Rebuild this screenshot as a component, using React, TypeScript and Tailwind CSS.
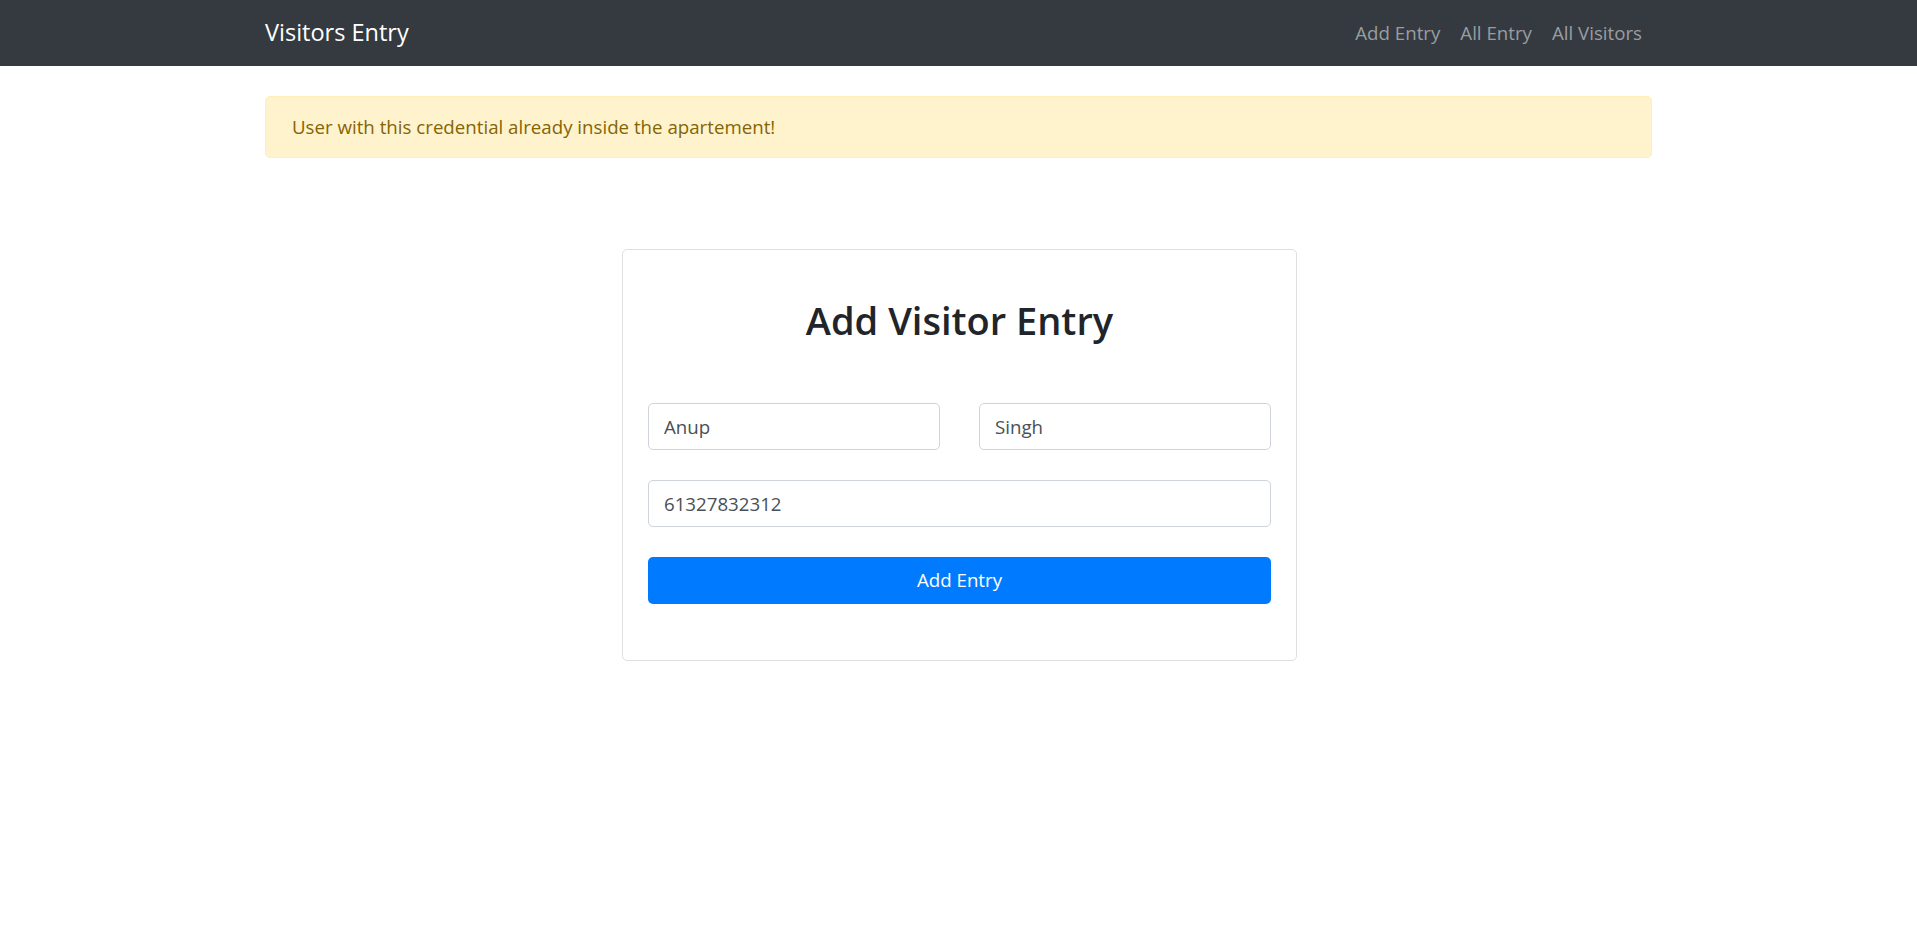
import React, { useState } from "react";

const font = { fontFamily: '"Segoe UI", "Open Sans", "Noto Sans", sans-serif' };

const Navbar = () => {
  return (
    <nav className="w-full h-[66px] bg-[#343a40]">
      <div className="w-[1387px] mx-auto h-full flex items-center justify-between">
        <a href="#" className="text-white text-[23.5px] leading-none">
          Visitors Entry
        </a>
        <ul className="flex items-center">
          {["Add Entry", "All Entry", "All Visitors"].map((label) => (
            <li key={label}>
              <a href="#" className="block px-[10px] text-[18.7px] text-[#9a9da0]">
                {label}
              </a>
            </li>
          ))}
        </ul>
      </div>
    </nav>
  );
};

export default function App() {
  const [firstName, setFirstName] = useState("Anup");
  const [lastName, setLastName] = useState("Singh");
  const [phone, setPhone] = useState("61327832312");

  const inputCls =
    "h-[47px] px-[15px] border border-[#ced4da] rounded-[5px] text-[18.7px] text-[#495057] outline-none bg-white";

  return (
    <div className="min-h-[927px] bg-white" style={font}>
      <Navbar />
      <main className="w-[1387px] mx-auto">
        <div className="mt-[30px] h-[62px] flex items-center px-[26px] bg-[#fff3cd] border border-[#ffeeba] rounded-[5px] text-[18.7px] text-[#856404]">
          User with this credential already inside the apartement!
        </div>

        <div className="mt-[91px] ml-[357px] w-[675px] border border-[#dfdfdf] rounded-[5px] px-[25px] pt-[48px] pb-[56px]">
          <h2 className="text-center text-[38px] leading-[1.2] font-semibold text-[#212529]">
            Add Visitor Entry
          </h2>
          <form className="mt-[59px] flex flex-col" onSubmit={(e) => e.preventDefault()}>
            <div className="flex gap-[39px]">
              <input
                value={firstName}
                onChange={(e) => setFirstName(e.target.value)}
                className={`${inputCls} w-[292px]`}
              />
              <input
                value={lastName}
                onChange={(e) => setLastName(e.target.value)}
                className={`${inputCls} w-[292px]`}
              />
            </div>
            <input
              value={phone}
              onChange={(e) => setPhone(e.target.value)}
              className={`${inputCls} mt-[30px] w-full`}
            />
            <button
              type="submit"
              className="mt-[30px] w-full h-[47px] bg-[#007bff] rounded-[5px] text-white text-[18.7px]"
            >
              Add Entry
            </button>
          </form>
        </div>
      </main>
    </div>
  );
}
